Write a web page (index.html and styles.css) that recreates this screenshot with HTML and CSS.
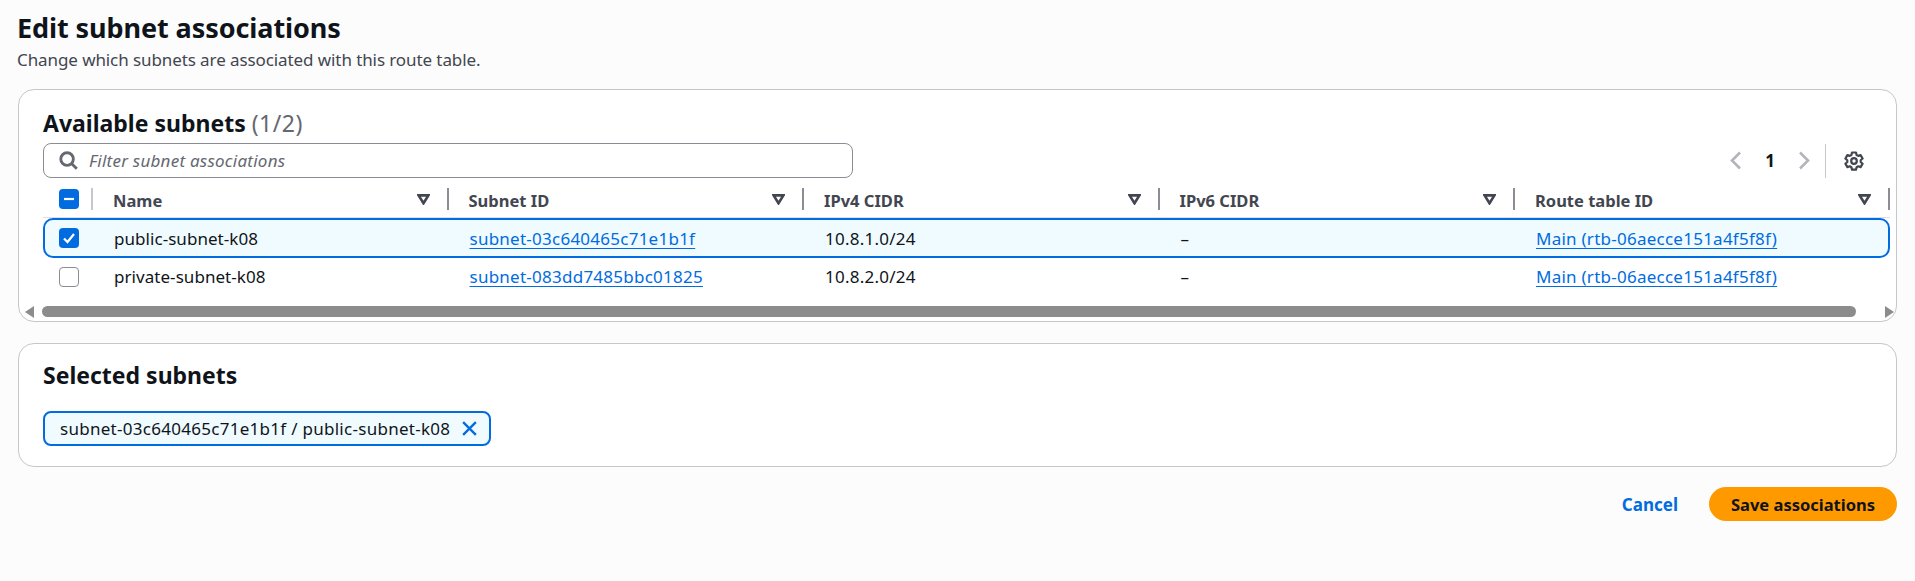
FILE: index.html
```html
<!DOCTYPE html>
<html lang="en">
<head>
<meta charset="utf-8">
<title>Edit subnet associations</title>
<link rel="stylesheet" href="styles.css">
</head>
<body>
<main class="page">
  <header class="page-head">
    <h1 class="page-title">Edit subnet associations</h1>
    <p class="page-sub">Change which subnets are associated with this route table.</p>
  </header>

  <section class="card card-table">
    <h2 class="card-title">Available subnets <span class="count">(1/2)</span></h2>
    <div class="tools">
      <label class="filter">
        <svg class="icon-search" viewBox="0 0 16 16"><circle cx="6.8" cy="6.8" r="5.3"/><path d="M10.7 10.7L15 15"/></svg>
        <span class="filter-text">Filter subnet associations</span>
      </label>
      <div class="pager">
        <svg class="icon-angle" viewBox="0 0 12 20"><path d="M10 2L2 10l8 8"/></svg>
        <span class="page-num">1</span>
        <svg class="icon-angle" viewBox="0 0 12 20"><path d="M2 2l8 8-8 8"/></svg>
        <span class="pager-sep"></span>
        <svg class="icon-gear" viewBox="0 0 20 20"><path d="M8 1.500h4l.6 2.500 1.600.9 2.400-.8 2 3.400-1.900 1.700v1.800l1.900 1.700-2 3.400-2.400-.8-1.600.9-.6 2.500H8l-.6-2.500-1.600-.9-2.400.8-2-3.400 1.900-1.700V9.200L1.400 7.500l2-3.400 2.400.8 1.600-.9z"/><circle cx="10" cy="10" r="2.800"/></svg>
      </div>
    </div>

    <div class="table">
      <div class="row row-head">
        <div class="cell cell-check"><span class="check check-on"><svg viewBox="0 0 20 20"><path d="M5 10h10"/></svg></span></div>
        <div class="cell cell-head">Name<svg class="icon-sort" viewBox="0 0 12 10"><path d="M1.500 1.200h9L6 8.500z"/></svg></div>
        <div class="cell cell-head">Subnet ID<svg class="icon-sort" viewBox="0 0 12 10"><path d="M1.500 1.200h9L6 8.500z"/></svg></div>
        <div class="cell cell-head">IPv4 CIDR<svg class="icon-sort" viewBox="0 0 12 10"><path d="M1.500 1.200h9L6 8.500z"/></svg></div>
        <div class="cell cell-head">IPv6 CIDR<svg class="icon-sort" viewBox="0 0 12 10"><path d="M1.500 1.200h9L6 8.500z"/></svg></div>
        <div class="cell cell-head">Route table ID<svg class="icon-sort" viewBox="0 0 12 10"><path d="M1.500 1.200h9L6 8.500z"/></svg></div>
      </div>
      <div class="row row-selected">
        <div class="cell cell-check"><span class="check check-on"><svg viewBox="0 0 20 20"><path d="M5 10.500l3.500 3.500L15 6"/></svg></span></div>
        <div class="cell cell-name">public-subnet-k08</div>
        <div class="cell"><a class="link" href="#">subnet-03c640465c71e1b1f</a></div>
        <div class="cell">10.8.1.0/24</div>
        <div class="cell">–</div>
        <div class="cell"><a class="link" href="#">Main (rtb-06aecce151a4f5f8f)</a></div>
      </div>
      <div class="row">
        <div class="cell cell-check"><span class="check"></span></div>
        <div class="cell cell-name">private-subnet-k08</div>
        <div class="cell"><a class="link" href="#">subnet-083dd7485bbc01825</a></div>
        <div class="cell">10.8.2.0/24</div>
        <div class="cell">–</div>
        <div class="cell"><a class="link" href="#">Main (rtb-06aecce151a4f5f8f)</a></div>
      </div>
    </div>

    <div class="scrollbar">
      <span class="arrow arrow-left"></span>
      <span class="thumb"></span>
      <span class="arrow arrow-right"></span>
    </div>
  </section>

  <section class="card card-selected">
    <h2 class="card-title">Selected subnets</h2>
    <div class="chip">
      <span>subnet-03c640465c71e1b1f / public-subnet-k08</span>
      <svg class="icon-close" viewBox="0 0 16 16"><path d="M2 2l12 12M14 2L2 14"/></svg>
    </div>
  </section>

  <footer class="actions">
    <a class="cancel" href="#">Cancel</a>
    <button class="primary" type="button">Save associations</button>
  </footer>
</main>
</body>
</html>
```
FILE: styles.css
```css
* { box-sizing: border-box; }
html, body { margin: 0; height: 100%; }
body {
  background: #fcfcfc;
  color: #0f141a;
  font-family: "Noto Sans", "Open Sans", sans-serif;
  font-size: 17px;
}
.page { padding: 0 18px 0 18px; }
.page-head { padding-top: 10px; height: 89px; }
.page-title { margin: 0 0 0 -1px; font-size: 27px; line-height: 36px; font-weight: 700; letter-spacing: -.08px; }
.page-sub { margin: 2px 0 0 -1px; font-size: 17px; line-height: 24px; color: #424650; letter-spacing: -.09px; }

.card { background: #fff; border: 1px solid #c6c6cd; border-radius: 16px; }
.card-table { height: 233px; padding: 19px 7px 0 24px; }
.card-title { margin: 0; font-size: 23px; line-height: 28px; font-weight: 700; }
.count { font-weight: 400; color: #656871; letter-spacing: .5px; }

.tools { display: flex; justify-content: space-between; align-items: center; margin-top: 6px; height: 35px; }
.filter {
  display: flex; align-items: center; gap: 11px;
  width: 810px; height: 35px; padding-left: 15px;
  border: 1px solid #8c8c94; border-radius: 8px;
}
.filter-text { font-style: italic; color: #656871; letter-spacing: .24px; }
.icon-search { width: 19px; height: 19px; fill: none; stroke: #656871; stroke-width: 2.400; }

.pager { display: flex; align-items: center; height: 35px; padding-right: 25px; }
.icon-angle { width: 12px; height: 21px; fill: none; stroke: #b4b4bb; stroke-width: 2.600; }
.page-num { width: 56px; text-align: center; font-weight: 700; color: #0f141a; font-size: 17px; }
.pager-sep { width: 1px; height: 34px; background: #c6c6cd; margin-left: 15px; margin-right: 18px; }
.icon-gear { width: 20px; height: 20px; fill: none; stroke: #424650; stroke-width: 2.200; stroke-linejoin: round; }

.table { margin-top: 10px; width: 1847px; }
.row {
  display: grid;
  grid-template-columns: 50px 355.500px 355.500px 355.500px 355.500px 1fr;
  height: 37px; align-items: center;
  border: 2px solid transparent;
  letter-spacing: .25px;
}
.row-head { height: 30px; border: 0; border-bottom: 1px solid #dedee3; padding-bottom: 7px; font-weight: 700; color: #424650; letter-spacing: 0; }
.row-selected { background: #f0fbff; border-color: #006ce0; border-radius: 10px; height: 40px; }
.cell { display: flex; align-items: center; padding-left: 19px; white-space: nowrap; }
.cell-name { letter-spacing: .05px; }
.cell-check { padding-left: 14px; }
.row-head .cell { height: 22px; padding-right: 17px; justify-content: space-between; border-right: 2px solid #8c8c94; }
.row-head .cell-check { border-right: 2px solid #c6c6cd; padding-left: 16px; }
.row-head .cell-head { font-size: 16.500px; padding-left: 20px; padding-top: 2px; }
.check {
  display: block; flex: none; width: 20px; height: 20px;
  border: 1.500px solid #8c8c94; border-radius: 4px; background: #fff;
}
.check svg { display: block; width: 100%; height: 100%; fill: none; stroke: #fff; stroke-width: 2.200; }
.check-on { background: #006ce0; border: 0; }
.icon-sort { width: 13px; height: 11px; fill: none; stroke: #424650; stroke-width: 2.400; flex: none; margin-top: -2px; }
.link { color: #006ce0; text-decoration: underline; text-underline-offset: 3px; text-decoration-thickness: 1px; }

.scrollbar { display: flex; align-items: center; height: 11px; margin: 11px -6px 0 -18px; }
.thumb { height: 11px; width: 1814px; margin-left: 8px; margin-right: 29px; background: #8c8c8c; border-radius: 6px; }
.arrow { width: 0; height: 0; border-top: 6px solid transparent; border-bottom: 6px solid transparent; flex: none; }
.arrow-left { border-right: 9px solid #8c8c8c; }
.arrow-right { border-left: 9px solid #8c8c8c; }

.card-selected { margin-top: 21px; height: 124px; padding: 17px 24px 0 24px; }
.chip {
  display: inline-flex; align-items: center; gap: 11px;
  height: 35px; margin-top: 22px; padding: 0 11px 0 15px;
  background: #f0fbff; border: 2px solid #006ce0; border-radius: 8px;
  font-size: 17px; color: #0f141a; letter-spacing: .28px;
}
.icon-close { width: 17px; height: 17px; fill: none; stroke: #006ce0; stroke-width: 2.200; }

.actions { display: flex; justify-content: flex-end; align-items: center; gap: 31px; margin-top: 20px; }
.cancel { color: #006ce0; font-weight: 700; text-decoration: none; }
.primary {
  width: 188px; height: 34px; border: 0; border-radius: 17px;
  background: #ff9900; color: #0f141a; font: 700 16.500px "Noto Sans", sans-serif;
}
```
